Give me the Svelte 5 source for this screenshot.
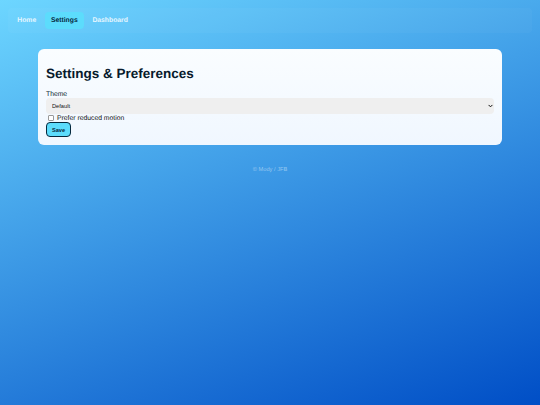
<script lang="ts">
  const links = [
    { label: "Home", active: false },
    { label: "Settings", active: true },
    { label: "Dashboard", active: false },
  ];
</script>

<div class="page">
  <nav class="nav">
    {#each links as link (link.label)}
      <a href="#top" class="link" class:active={link.active}>{link.label}</a>
    {/each}
  </nav>

  <main class="card">
    <h1>Settings &amp; Preferences</h1>
    <form class="form" onsubmit={(e) => e.preventDefault()}>
      <label class="field" for="theme">Theme</label>
      <div class="select-wrap">
        <select id="theme">
          <option>Default</option>
        </select>
        <svg class="chevron" viewBox="0 0 6 4" width="5" height="4" aria-hidden="true">
          <path d="M0.7 0.7 L3 3 L5.3 0.7" fill="none" stroke="#111" stroke-width="1.2" />
        </svg>
      </div>
      <label class="check">
        <input type="checkbox" />
        <span>Prefer reduced motion</span>
      </label>
      <button type="submit">Save</button>
    </form>
  </main>

  <footer>© Mody / JFB</footer>
</div>

<style>
  :global(body) {
    margin: 0;
  }
  .page {
    box-sizing: border-box;
    height: 405px;
    overflow: hidden;
    padding: 8px 8px 0;
    display: flex;
    flex-direction: column;
    font-family: "Liberation Sans", Arial, sans-serif;
    text-rendering: geometricPrecision;
    background: linear-gradient(160deg, #6dd6ff 0%, #004ec6 100%);
  }
  .nav {
    box-sizing: border-box;
    flex: none;
    display: flex;
    align-items: center;
    gap: 2.7px;
    height: 25px;
    padding-left: 3.3px;
    background: rgba(255, 255, 255, 0.03);
    border-radius: 4px;
  }
  .link {
    padding: 3px 6px;
    border-radius: 4px;
    font-size: 6.8px;
    line-height: 11px;
    font-weight: 700;
    color: #e6f6ff;
    text-decoration: none;
  }
  .link.active {
    background: #5cdcfc;
    color: #06283d;
  }
  .card {
    box-sizing: border-box;
    flex: none;
    width: 464px;
    height: 96px;
    margin: 16px 0 0 30px;
    padding: 16px 8px 8px;
    border-radius: 6px;
    background: linear-gradient(180deg, #fafdff, #f0f7ff);
    color: #071a2c;
  }
  h1 {
    margin: 0 0 8px;
    font-size: 13.5px;
    line-height: 18px;
    font-weight: 700;
  }
  .form {
    display: flex;
    flex-direction: column;
    align-items: flex-start;
  }
  .field {
    font-size: 6.8px;
    line-height: 7px;
  }
  .select-wrap {
    position: relative;
    width: 100%;
    height: 16px;
  }
  select {
    appearance: none;
    display: block;
    box-sizing: border-box;
    width: 100%;
    height: 16px;
    padding: 0 8px 0 6px;
    border: 0;
    border-radius: 4px;
    background-color: #efefef;
    color: #111;
    font-family: inherit;
    font-size: 5.7px;
  }
  .chevron {
    position: absolute;
    top: 6px;
    right: 1px;
  }
  .check {
    display: flex;
    align-items: center;
    gap: 3px;
    height: 8px;
    font-size: 6.8px;
    color: #111;
  }
  .check input {
    appearance: none;
    box-sizing: border-box;
    width: 6px;
    height: 6px;
    margin: 0 0 0 2px;
    border: 0.6px solid #999;
    border-radius: 1px;
    background: #fff;
  }
  button {
    box-sizing: border-box;
    width: 25px;
    height: 15px;
    padding: 0;
    border: 1px solid #06283d;
    border-radius: 4px;
    background: #5cdcfc;
    color: #06283d;
    font-family: inherit;
    font-size: 5.6px;
    font-weight: 700;
  }
  footer {
    margin-top: 21px;
    text-align: center;
    font-size: 5.7px;
    line-height: 8px;
    color: rgba(255, 255, 255, 0.45);
  }
</style>
